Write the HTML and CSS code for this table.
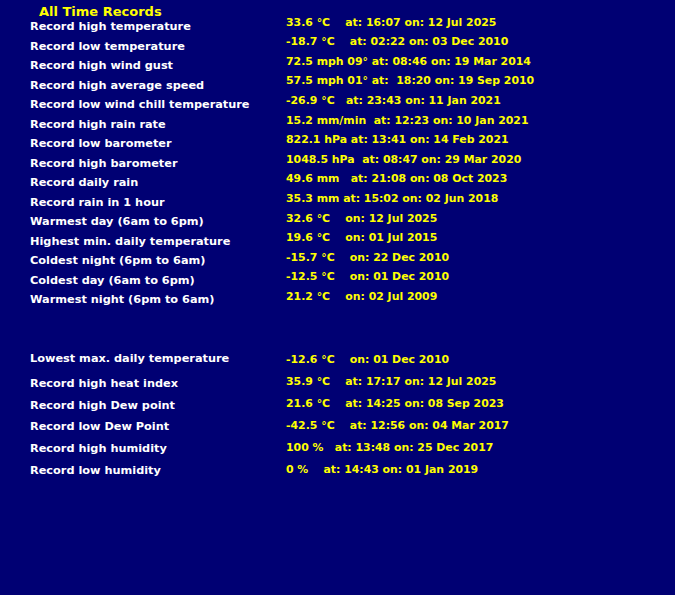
FILE: index.html
```html
<!DOCTYPE html>
<html lang="en">
<head>
<meta charset="utf-8">
<title>All Time Records</title>
<link rel="stylesheet" href="styles.css">
</head>
<body>
<div class="board">
  <div class="col labels">
    <div class="title">All Time Records</div>
    <div class="group g1">
      <div class="row">Record high temperature</div>
      <div class="row">Record low temperature</div>
      <div class="row">Record high wind gust</div>
      <div class="row">Record high average speed</div>
      <div class="row">Record low wind chill temperature</div>
      <div class="row">Record high rain rate</div>
      <div class="row">Record low barometer</div>
      <div class="row">Record high barometer</div>
      <div class="row">Record daily rain</div>
      <div class="row">Record rain in 1 hour</div>
      <div class="row">Warmest day (6am to 6pm)</div>
      <div class="row">Highest min. daily temperature</div>
      <div class="row">Coldest night (6pm to 6am)</div>
      <div class="row">Coldest day (6am to 6pm)</div>
      <div class="row">Warmest night (6pm to 6am)</div>
    </div>
    <div class="group g2">
      <div class="row lead">Lowest max. daily temperature</div>
      <div class="row">Record high heat index</div>
      <div class="row">Record high Dew point</div>
      <div class="row">Record low Dew Point</div>
      <div class="row">Record high humidity</div>
      <div class="row">Record low humidity</div>
    </div>
  </div>
  <div class="col values">
    <div class="group g1">
      <div class="row">33.6 °C    at: 16:07 on: 12 Jul 2025</div>
      <div class="row">-18.7 °C    at: 02:22 on: 03 Dec 2010</div>
      <div class="row">72.5 mph 09° at: 08:46 on: 19 Mar 2014</div>
      <div class="row">57.5 mph 01° at:  18:20 on: 19 Sep 2010</div>
      <div class="row">-26.9 °C   at: 23:43 on: 11 Jan 2021</div>
      <div class="row">15.2 mm/min  at: 12:23 on: 10 Jan 2021</div>
      <div class="row">822.1 hPa at: 13:41 on: 14 Feb 2021</div>
      <div class="row">1048.5 hPa  at: 08:47 on: 29 Mar 2020</div>
      <div class="row">49.6 mm   at: 21:08 on: 08 Oct 2023</div>
      <div class="row">35.3 mm at: 15:02 on: 02 Jun 2018</div>
      <div class="row">32.6 °C    on: 12 Jul 2025</div>
      <div class="row">19.6 °C    on: 01 Jul 2015</div>
      <div class="row">-15.7 °C    on: 22 Dec 2010</div>
      <div class="row">-12.5 °C    on: 01 Dec 2010</div>
      <div class="row">21.2 °C    on: 02 Jul 2009</div>
    </div>
    <div class="group g2">
      <div class="row">-12.6 °C    on: 01 Dec 2010</div>
      <div class="row">35.9 °C    at: 17:17 on: 12 Jul 2025</div>
      <div class="row">21.6 °C    at: 14:25 on: 08 Sep 2023</div>
      <div class="row">-42.5 °C    at: 12:56 on: 04 Mar 2017</div>
      <div class="row">100 %   at: 13:48 on: 25 Dec 2017</div>
      <div class="row">0 %    at: 14:43 on: 01 Jan 2019</div>
    </div>
  </div>
</div>
</body>
</html>
```
FILE: styles.css
```css
html, body {
  margin: 0;
  height: 100%;
  background: #000073;
}
body {
  font-family: "DejaVu Sans", sans-serif;
  font-weight: bold;
  font-size: 11px;
}
.board {
  display: flex;
}
.labels {
  box-sizing: border-box;
  width: 286px;
  padding-left: 30px;
  color: #ffffff;
  font-size: 11.3px;
}
.title {
  color: #ffff00;
  font-size: 13px;
  height: 13.5px;
  line-height: 16px;
  padding-top: 3.5px;
  padding-left: 9px;
}
.row {
  white-space: pre;
}
.labels .g1 .row {
  height: 19.5px;
  line-height: 19.5px;
}
.labels .g2 {
  margin-top: 38.4px;
}
.labels .g2 .row {
  height: 21.75px;
  line-height: 21.75px;
}
.labels .g2 .lead {
  margin-bottom: 3.25px;
}
.values {
  padding-top: 12.7px;
  color: #ffff00;
  font-size: 10.9px;
}
.values .g1 .row {
  height: 19.6px;
  line-height: 19.6px;
}
.values .g2 {
  margin-top: 42.8px;
}
.values .g2 .row {
  height: 22px;
  line-height: 22px;
}
```
